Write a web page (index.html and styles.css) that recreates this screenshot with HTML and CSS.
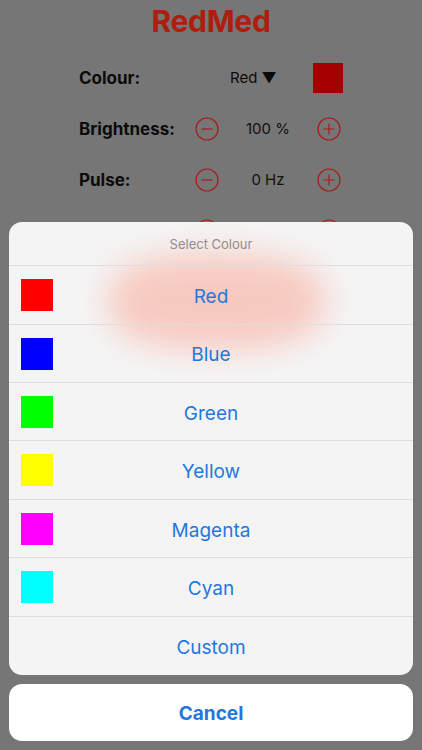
FILE: index.html
```html
<!DOCTYPE html>
<html>
<head>
<meta charset="utf-8">
<link rel="stylesheet" href="styles.css">
</head>
<body>
<div class="screen">
  <div class="app">
    <h1 class="title">RedMed</h1>
    <div class="row colour-row">
      <span class="label">Colour:</span>
      <span class="picker">Red ▼</span>
      <span class="swatch-big"></span>
    </div>
    <div class="row">
      <span class="label">Brightness:</span>
      <span class="circ"><svg viewBox="0 0 24 24" width="24" height="24"><circle cx="12" cy="12" r="11" fill="none" stroke="#a81c1c" stroke-width="1.2"/><path d="M6.5 12h11" stroke="#a81c1c" stroke-width="1.2"/></svg></span>
      <span class="value">100 %</span>
      <span class="circ"><svg viewBox="0 0 24 24" width="24" height="24"><circle cx="12" cy="12" r="11" fill="none" stroke="#a81c1c" stroke-width="1.2"/><path d="M6.5 12h11M12 6.5v11" stroke="#a81c1c" stroke-width="1.2"/></svg></span>
    </div>
    <div class="row">
      <span class="label">Pulse:</span>
      <span class="circ"><svg viewBox="0 0 24 24" width="24" height="24"><circle cx="12" cy="12" r="11" fill="none" stroke="#a81c1c" stroke-width="1.2"/><path d="M6.5 12h11" stroke="#a81c1c" stroke-width="1.2"/></svg></span>
      <span class="value">0 Hz</span>
      <span class="circ"><svg viewBox="0 0 24 24" width="24" height="24"><circle cx="12" cy="12" r="11" fill="none" stroke="#a81c1c" stroke-width="1.2"/><path d="M6.5 12h11M12 6.5v11" stroke="#a81c1c" stroke-width="1.2"/></svg></span>
    </div>
    <div class="row">
      <span class="label"></span>
      <span class="circ"><svg viewBox="0 0 24 24" width="24" height="24"><circle cx="12" cy="12" r="11" fill="none" stroke="#a81c1c" stroke-width="1.2"/></svg></span>
      <span class="value"></span>
      <span class="circ"><svg viewBox="0 0 24 24" width="24" height="24"><circle cx="12" cy="12" r="11" fill="none" stroke="#a81c1c" stroke-width="1.2"/></svg></span>
    </div>
  </div>

  <div class="sheet">
    <div class="group">
      <div class="glow"></div>
      <div class="header">Select Colour</div>
      <div class="option"><span class="sw" style="background:#ff0000"></span><span class="opt-text">Red</span></div>
      <div class="option"><span class="sw" style="background:#0000ff"></span><span class="opt-text">Blue</span></div>
      <div class="option"><span class="sw" style="background:#00ff00"></span><span class="opt-text">Green</span></div>
      <div class="option"><span class="sw" style="background:#ffff00"></span><span class="opt-text">Yellow</span></div>
      <div class="option"><span class="sw" style="background:#ff00ff"></span><span class="opt-text">Magenta</span></div>
      <div class="option"><span class="sw" style="background:#00ffff"></span><span class="opt-text">Cyan</span></div>
      <div class="option"><span class="opt-text">Custom</span></div>
    </div>
    <div class="cancel">Cancel</div>
  </div>
</div>
</body>
</html>
```

FILE: styles.css
```css
* { box-sizing: border-box; }
html, body { margin: 0; padding: 0; }
body {
  width: 422px;
  height: 750px;
  overflow: hidden;
  background: #767676;
  font-family: Inter, "Liberation Sans", sans-serif;
}
.screen {
  position: relative;
  width: 422px;
  height: 750px;
}
.app {
  display: flex;
  flex-direction: column;
  align-items: stretch;
}
.title {
  margin: 0;
  padding-top: 3px;
  height: 52px;
  text-align: center;
  color: #ae1d0d;
  font-size: 30px;
  font-weight: 700;
  letter-spacing: -0.3px;
  line-height: 36px;
}
.row {
  display: grid;
  grid-template-columns: 116px 24px 98px 24px;
  align-items: center;
  height: 51px;
  padding-left: 79px;
  color: #0b0b0b;
}
.label {
  font-size: 17px;
  font-weight: 700;
}
.circ {
  display: flex;
  width: 24px;
  height: 24px;
}
.value {
  text-align: center;
  font-size: 15px;
  color: #111;
}
.colour-row {
  display: flex;
  align-items: center;
}
.colour-row .label { width: 151px; }
.picker {
  font-size: 15px;
  width: 83px;
}
.swatch-big {
  width: 30px;
  height: 30px;
  background: #a50000;
}
.sheet {
  position: absolute;
  left: 9px;
  right: 9px;
  bottom: 9px;
  display: flex;
  flex-direction: column;
  gap: 9px;
}
.group {
  position: relative;
  overflow: hidden;
  border-radius: 13px;
  background: #f5f4f4;
}
.glow {
  position: absolute;
  left: 100px;
  top: 32px;
  width: 215px;
  height: 95px;
  border-radius: 40%;
  background: rgba(250, 150, 130, 0.45);
  filter: blur(16px);
}
.header {
  position: relative;
  height: 44.5px;
  display: flex;
  align-items: center;
  justify-content: center;
  font-size: 13px;
  color: #8e8e8e;
  border-bottom: 1px solid #dedede;
}
.option {
  position: relative;
  height: 58.4px;
  display: flex;
  align-items: center;
  justify-content: center;
  padding-top: 3px;
  border-bottom: 1px solid #dedede;
}
.option:last-child { border-bottom: none; }
.sw {
  position: absolute;
  left: 12px;
  top: 13px;
  width: 32px;
  height: 32px;
}
.opt-text {
  font-size: 19px;
  color: #1f78e0;
}
.cancel {
  height: 57px;
  background: #fff;
  border-radius: 13px;
  display: flex;
  align-items: center;
  justify-content: center;
  padding-top: 2px;
  font-size: 19px;
  font-weight: 700;
  color: #1f78e0;
}
```
